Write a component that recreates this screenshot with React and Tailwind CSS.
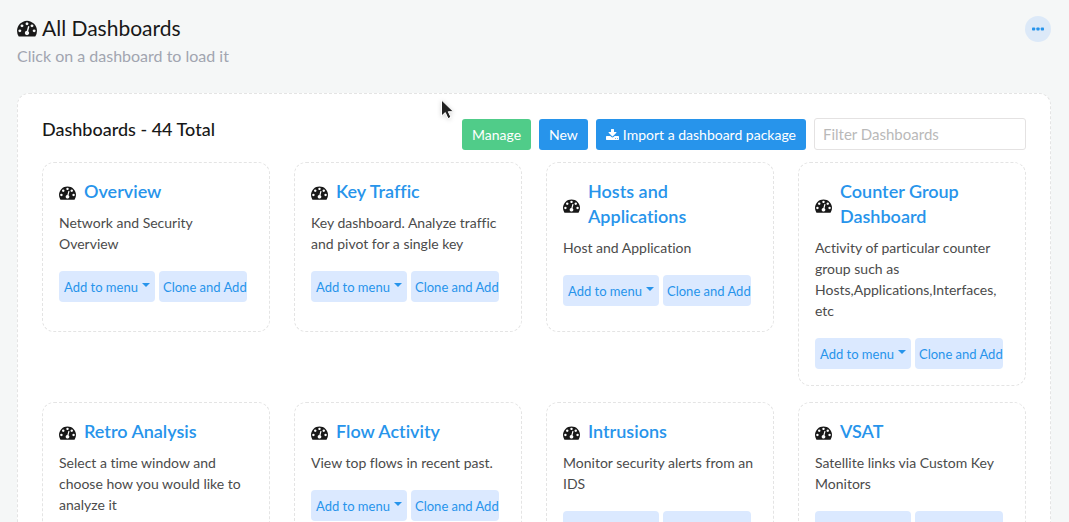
import React from "react";

function GaugeIcon({ className }) {
  return (
    <svg viewBox="0 0 1792 1536" fill="currentColor" aria-hidden="true" className={className}>
      <path d="M384 1024q0-53-37.5-90.5t-90.5-37.5-90.5 37.5-37.5 90.5 37.5 90.5 90.5 37.5 90.5-37.5 37.5-90.5zm192-448q0-53-37.5-90.5t-90.5-37.5-90.5 37.5-37.5 90.5 37.5 90.5 90.5 37.5 90.5-37.5 37.5-90.5zm428 481l101-382q6-26-7.5-48.5t-38.5-29.5-48 6.5-30 39.5l-101 382q-60 5-107 43.5t-63 98.5q-20 77 20 146t117 89 146-20 89-117q16-60-6-117t-72-91zm660-33q0-53-37.5-90.5t-90.5-37.5-90.5 37.5-37.5 90.5 37.5 90.5 90.5 37.5 90.5-37.5 37.5-90.5zm-640-640q0-53-37.5-90.5t-90.5-37.5-90.5 37.5-37.5 90.5 37.5 90.5 90.5 37.5 90.5-37.5 37.5-90.5zm448 192q0-53-37.5-90.5t-90.5-37.5-90.5 37.5-37.5 90.5 37.5 90.5 90.5 37.5 90.5-37.5 37.5-90.5zm320 448q0 261-141 483-19 29-54 29h-1402q-35 0-54-29-141-221-141-483 0-182 71-348t191-286 286-191 348-71 348 71 286 191 191 286 71 348z" />
    </svg>
  );
}

function DownloadIcon({ className }) {
  return (
    <svg viewBox="0 0 1664 1536" fill="currentColor" aria-hidden="true" className={className}>
      <path d="M1280 1216q0-26-19-45t-45-19-45 19-19 45 19 45 45 19 45-19 19-45zm256 0q0-26-19-45t-45-19-45 19-19 45 19 45 45 19 45-19 19-45zm128-224v320q0 40-28 68t-68 28h-1472q-40 0-68-28t-28-68v-320q0-40 28-68t68-28h465l135 136q58 56 136 56t136-56l136-136h464q40 0 68 28t28 68zm-325-569q17 41-14 70l-448 448q-18 19-45 19t-45-19l-448-448q-31-29-14-70 17-39 59-39h256v-320q0-26 19-45t45-19h256q26 0 45 19t19 45v320h256q42 0 59 39z" />
    </svg>
  );
}

const dashboards = [
  { title: "Overview", text: "Network and Security Overview" },
  { title: "Key Traffic", text: "Key dashboard. Analyze traffic and pivot for a single key" },
  { title: "Hosts and Applications", text: "Host and Application" },
  {
    title: "Counter Group Dashboard",
    text: "Activity of particular counter group such as Hosts,Applications,Interfaces, etc",
  },
  { title: "Retro Analysis", text: "Select a time window and choose how you would like to analyze it" },
  { title: "Flow Activity", text: "View top flows in recent past." },
  { title: "Intrusions", text: "Monitor security alerts from an IDS" },
  { title: "VSAT", text: "Satellite links via Custom Key Monitors" },
];

function DashboardCard({ title, text }) {
  return (
    <article className="min-h-[170px] rounded-xl border border-dashed border-[#e4e4e4] p-4">
      <div className="flex items-center gap-2">
        <GaugeIcon className="mt-0.5 h-[15px] w-[17px] shrink-0 text-[#181818]" />
        <h3 className="max-w-[140px] text-[18px] leading-[25px] font-semibold text-[#2794eb]">
          <a href="#">{title}</a>
        </h3>
      </div>
      <p className="mt-2 text-[14px] leading-[21px] text-[#4b4b4b]">{text}</p>
      <div className="mt-[17px] flex gap-1 text-[13px] text-[#2794eb]">
        <button className="flex h-[31px] w-24 shrink-0 items-center justify-between rounded bg-[#dbe9ff] px-[5px] pt-0.5 whitespace-nowrap">
          Add to menu
          <svg viewBox="0 0 8 4" fill="currentColor" aria-hidden="true" className="mb-1.5 h-1 w-2">
            <path d="M0 0h8L4 4z" />
          </svg>
        </button>
        <button className="h-[31px] w-[88px] shrink-0 overflow-hidden rounded bg-[#dbe9ff] pt-0.5 pl-1 text-left whitespace-nowrap">
          Clone and Add
        </button>
      </div>
    </article>
  );
}

export default function App() {
  return (
    <div className="min-h-screen bg-[#f5f7f7] pt-[15px] pr-[18px] pb-6 pl-[17px] font-['Lato','Open_Sans',sans-serif] text-[#181818] [font-variant-ligatures:none]">
      <header className="flex items-start justify-between">
        <div>
          <h1 className="flex items-center gap-[5px] text-[21px] leading-[26px]">
            <GaugeIcon className="h-[18px] w-5" />
            All Dashboards
          </h1>
          <p className="mt-[3px] text-[16px] leading-6 text-[#a1a5b0]">Click on a dashboard to load it</p>
        </div>
        <button
          aria-label="More actions"
          className="mt-px flex size-[26px] items-center justify-center rounded-full bg-[#dce9f8] text-[#2794eb]"
        >
          <svg viewBox="0 0 12 4" fill="currentColor" aria-hidden="true" className="h-1 w-3">
            <rect x="0" y="0.5" width="3.2" height="3" rx="0.8" />
            <rect x="4.4" y="0.5" width="3.2" height="3" rx="0.8" />
            <rect x="8.8" y="0.5" width="3.2" height="3" rx="0.8" />
          </svg>
        </button>
      </header>

      <main className="mt-[25px] rounded-xl border border-dashed border-[#e4e4e4] bg-white p-6">
        <div className="flex items-start justify-between">
          <h2 className="text-[18px] leading-[22px] font-medium">Dashboards - 44 Total</h2>
          <div className="flex items-end gap-2 text-[14px] text-white">
            <button className="h-[31px] rounded-[3px] bg-[#50cc89] px-2.5">Manage</button>
            <button className="h-[31px] rounded-[3px] bg-[#2794eb] px-2.5">New</button>
            <button className="flex h-[31px] items-center gap-1 rounded-[3px] bg-[#2794eb] px-2.5">
              <DownloadIcon className="h-3 w-[13px]" />
              Import a dashboard package
            </button>
            <input
              type="text"
              aria-label="Filter Dashboards"
              placeholder="Filter Dashboards"
              className="h-8 w-[212px] rounded-[3px] border border-[#e4e2e2] bg-white px-2 text-[15px] text-[#4b4b4b] placeholder:text-[#b9b9b9]"
            />
          </div>
        </div>
        <section className="mt-3 grid grid-cols-4 items-start gap-x-6 gap-y-4">
          {dashboards.map((d) => (
            <DashboardCard key={d.title} {...d} />
          ))}
        </section>
      </main>

      <svg viewBox="0 0 14 21" aria-hidden="true" className="absolute top-[99px] left-[440px] h-[21px] w-[14px] drop-shadow-sm">
        <path
          d="M1.500 1v16l3.800-3.400 2.700 6 3-1.300-2.700-5.600h5.200z"
          fill="#222"
          stroke="#fff"
          strokeWidth="1"
        />
      </svg>
    </div>
  );
}
